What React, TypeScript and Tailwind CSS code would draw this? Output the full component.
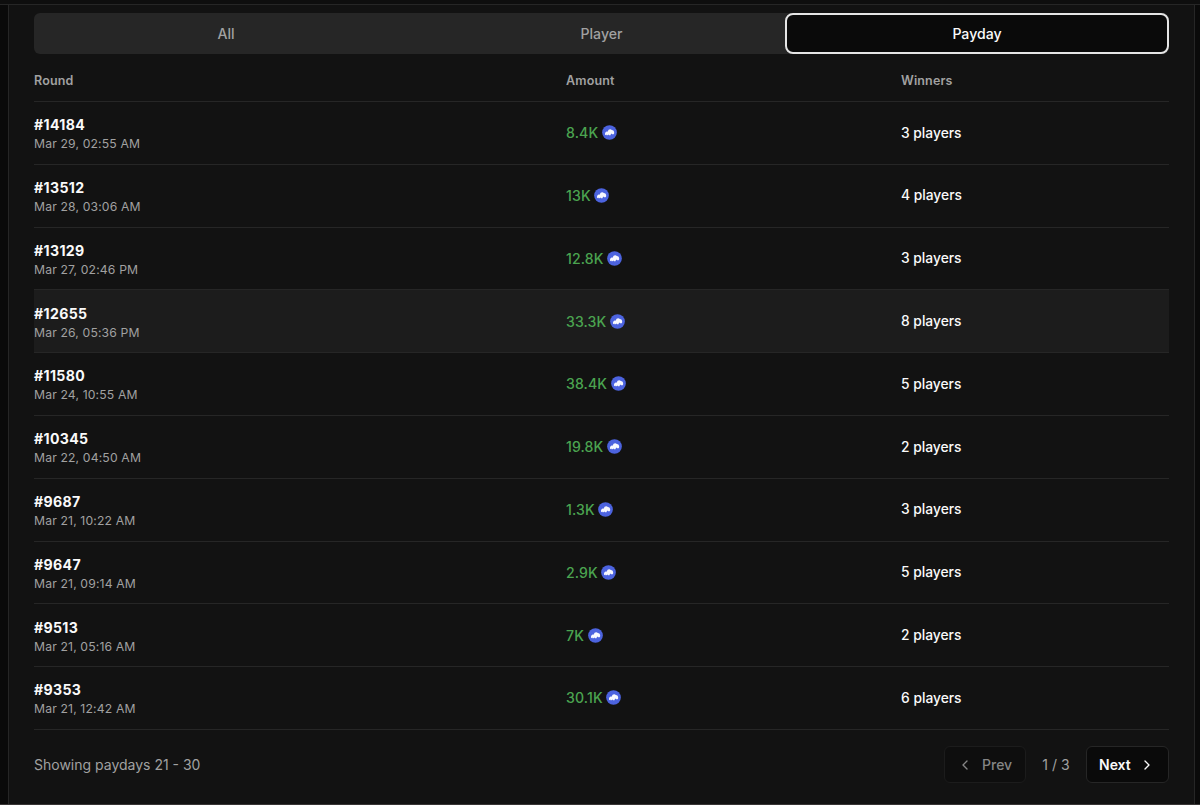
import { ChevronLeft, ChevronRight } from "lucide-react";

type Payday = { round: string; date: string; amount: string; winners: number; active?: boolean };

const paydays: Payday[] = [
  { round: "#14184", date: "Mar 29, 02:55 AM", amount: "8.4K", winners: 3 },
  { round: "#13512", date: "Mar 28, 03:06 AM", amount: "13K", winners: 4 },
  { round: "#13129", date: "Mar 27, 02:46 PM", amount: "12.8K", winners: 3 },
  { round: "#12655", date: "Mar 26, 05:36 PM", amount: "33.3K", winners: 8, active: true },
  { round: "#11580", date: "Mar 24, 10:55 AM", amount: "38.4K", winners: 5 },
  { round: "#10345", date: "Mar 22, 04:50 AM", amount: "19.8K", winners: 2 },
  { round: "#9687", date: "Mar 21, 10:22 AM", amount: "1.3K", winners: 3 },
  { round: "#9647", date: "Mar 21, 09:14 AM", amount: "2.9K", winners: 5 },
  { round: "#9513", date: "Mar 21, 05:16 AM", amount: "7K", winners: 2 },
  { round: "#9353", date: "Mar 21, 12:42 AM", amount: "30.1K", winners: 6 },
];

function Coin() {
  return (
    <svg className="size-[15px] shrink-0" viewBox="0 0 30 30" aria-hidden="true">
      <circle cx="15" cy="15" r="14.7" fill="#4c63df" />
      <path
        d="M6 20.500V17c.4-2.200 1.700-3.500 3.600-3.900h2.300c.3-2.700 1.900-4.500 4.400-4.500 1.500 0 2.500.6 3.300 1.600 2.600.1 4.300 1.700 4.700 4.300.3 1.500 0 2.800-.9 4h-3.200l-.9-1.600-1.700 1.500-.6 2h-3l-1-1.600-2 1.700h-1.900l-.6-1.300z"
        fill="#f7f8ff"
      />
    </svg>
  );
}

export default function App() {
  return (
    <div className="flex h-[805px] w-[1200px] flex-col overflow-hidden bg-[#0a0a0a] font-['Inter',sans-serif] text-[#fafafa]">
      <div className="h-[5px] shrink-0 border-b border-[#262626] bg-[#0e0e0e]" />
      <main className="ml-2 mr-[5px] flex h-[799px] flex-col border-x border-[#262626] bg-[#121212] pl-[25px] pr-[25px] pt-2">
        <div className="flex h-[41px] shrink-0 rounded-md bg-[#262626] text-[14.1px] font-medium text-[#a1a1a1]">
          <button className="w-[384px] pt-px">All</button>
          <button className="w-[367px] pt-px">Player</button>
          <button className="flex-1 rounded-lg border-2 border-[#e5e5e5] bg-[#0a0a0a] pt-px text-[#fafafa]">Payday</button>
        </div>
        <table className="w-full table-fixed border-collapse text-left">
          <colgroup>
            <col className="w-[532px]" />
            <col className="w-[335px]" />
            <col />
          </colgroup>
          <thead>
            <tr className="h-[47.5px] border-b border-[#262626] text-[12.5px] tracking-[0.012em] text-[#a1a1a1]">
              <th className="pt-2 font-semibold">Round</th>
              <th className="pt-2 font-semibold">Amount</th>
              <th className="pt-2 font-semibold">Winners</th>
            </tr>
          </thead>
          <tbody>
            {paydays.map((p) => (
              <tr key={p.round} className={p.active ? "h-[62.8px] border-b border-[#262626] bg-[#1c1c1c]" : "h-[62.8px] border-b border-[#262626]"}>
                <td className="pt-[1.6px]">
                  <div className="text-[14.1px] leading-5 font-bold tracking-[0.025em]">{p.round}</div>
                  <div className="text-[12.2px] leading-[17px] tracking-[0.012em] text-[#a1a1a1]">{p.date}</div>
                </td>
                <td className="pb-[0.4px]">
                  <div className="flex items-center gap-[3.6px] text-[14.1px] font-medium tracking-[0.008em] text-[#4ba450]">
                    {p.amount}
                    <Coin />
                  </div>
                </td>
                <td className="text-[13.8px] font-medium">{p.winners} players</td>
              </tr>
            ))}
          </tbody>
        </table>
        <footer className="mt-4 flex h-[38px] items-center justify-between text-[14px] text-[#a1a1a1]">
          <span>Showing paydays 21 - 30</span>
          <div className="flex items-center">
            <button className="flex h-[37px] w-[82px] items-center rounded-md border border-[#1c1c1c] bg-[#0e0e0e] pl-3 font-medium text-[#858585]">
              <ChevronLeft className="mr-[9px] size-4" />
              Prev
            </button>
            <span className="w-[60px] text-center">1 / 3</span>
            <button className="flex h-[37px] w-[83px] items-center rounded-md border border-[#262626] bg-[#0a0a0a] pl-3 font-semibold text-[#fafafa]">
              Next
              <ChevronRight className="ml-2 size-4" />
            </button>
          </div>
        </footer>
      </main>
      <div className="h-px shrink-0 bg-[#383535]" />
    </div>
  );
}
